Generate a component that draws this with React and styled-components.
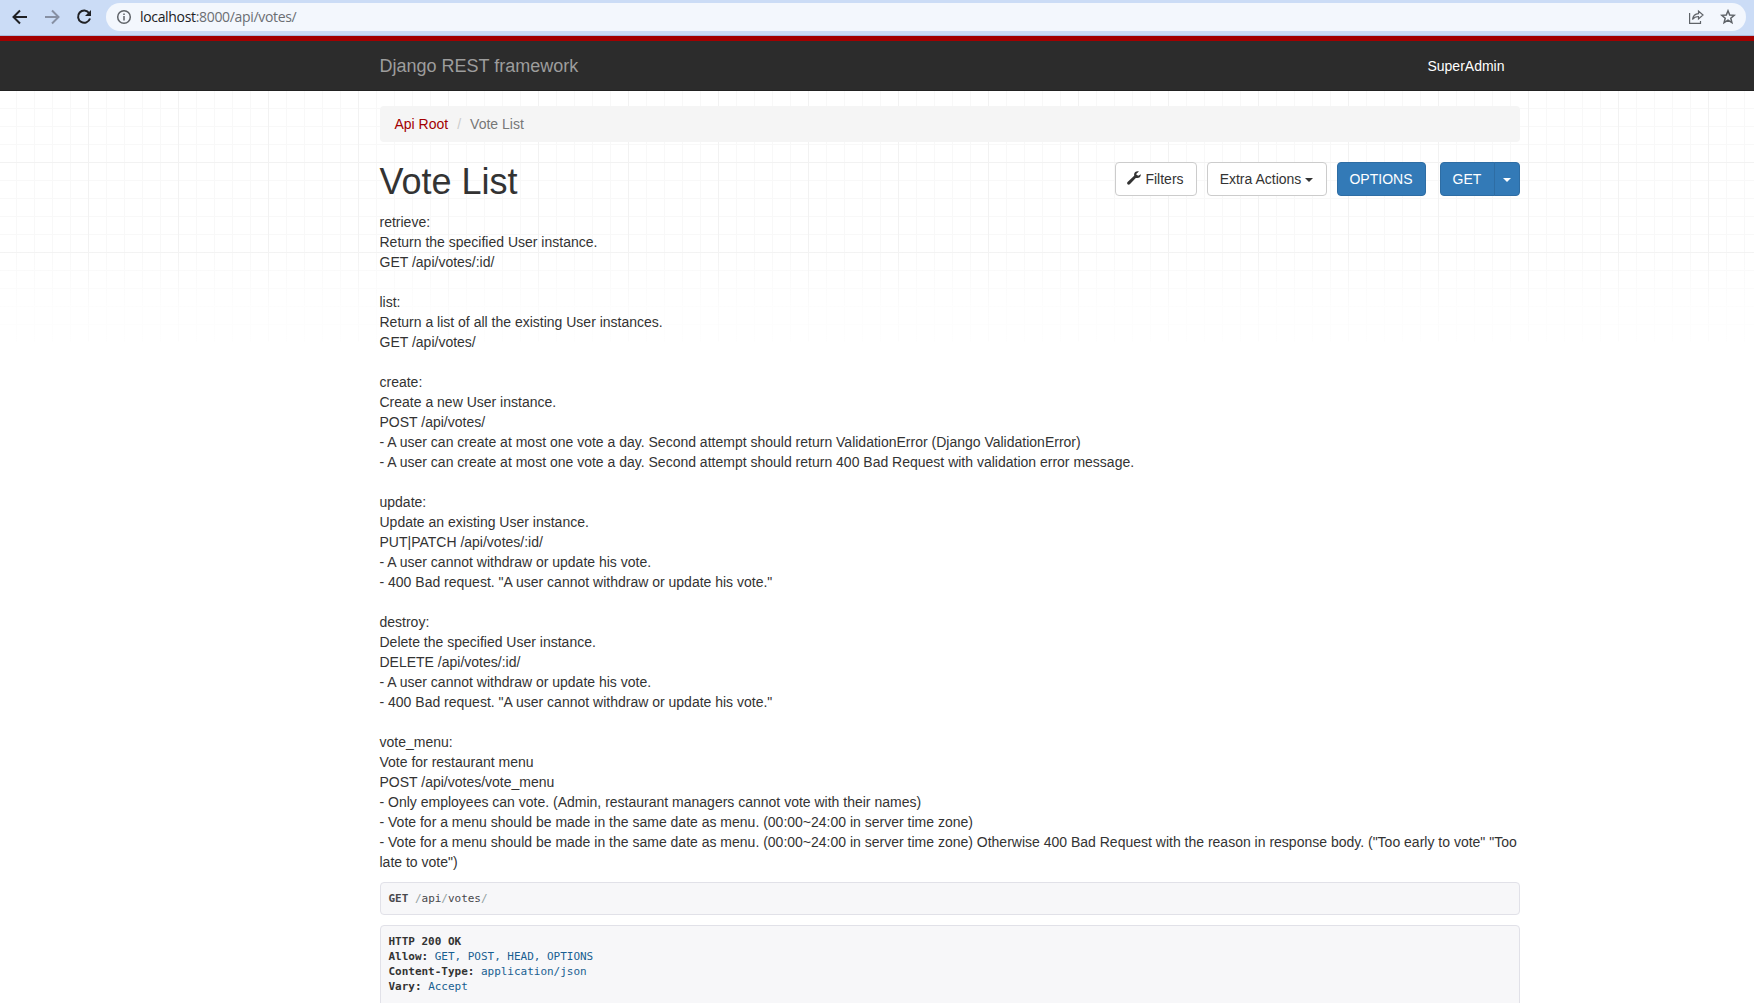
import React from "react";
import styled, { createGlobalStyle } from "styled-components";

const Global = createGlobalStyle`
  * { box-sizing: border-box; }
  html, body { margin: 0; padding: 0; height: 100%; overflow: hidden; }
  body {
    font-family: "Liberation Sans", Arial, sans-serif;
    font-size: 14px;
    line-height: 20px;
    color: #333;
    background: #fff;
  }
`;

const Screen = styled.div`
  display: flex;
  flex-direction: column;
  height: 1003px;
  overflow: hidden;
`;

const BrowserBar = styled.div`
  display: flex;
  align-items: center;
  flex: none;
  height: 36px;
  padding: 0 8px 1px 11px;
  background: #cbdcf6;
  border-bottom: 1px solid #aabbdb;
`;

const BrowserIcon = styled.svg`
  flex: none;
  width: 18px;
  height: 18px;
  margin-right: ${(p) => p.$gap || 14}px;
  fill: none;
  stroke: ${(p) => p.$color || "#202124"};
  stroke-width: 2;
`;

const AddressBar = styled.div`
  display: flex;
  align-items: center;
  flex: 1;
  height: 28px;
  padding: 0 10px;
  border-radius: 14px;
  background: #f3f7fd;
`;

const AddressIcon = styled.svg`
  flex: none;
  width: 16px;
  height: 16px;
  margin-left: ${(p) => p.$gap || 0}px;
  fill: none;
  stroke: #5f6368;
  stroke-width: 1.5;
`;

const Url = styled.span`
  flex: 1;
  margin-left: 8px;
  font-family: "Open Sans", "Noto Sans", sans-serif;
  font-size: 14px;
  letter-spacing: -0.33px;
  color: #6b6e73;
  b { font-weight: 400; color: #202124; }
`;

const NavBar = styled.nav`
  flex: none;
  height: 55px;
  border-top: 5px solid #a30000;
  border-bottom: 1px solid #222;
  background: #2c2c2c;
`;

const NavInner = styled.div`
  display: flex;
  justify-content: space-between;
  align-items: center;
  width: 1140px;
  height: 49px;
  margin-left: 379.5px;
  padding-right: 15px;
`;

const Brand = styled.span`
  font-size: 18px;
  color: #9d9d9d;
`;

const UserName = styled.span`
  color: #fff;
`;

const Page = styled.main`
  flex: 1;
  padding: 15px 0 0 379.5px;
  background:
    linear-gradient(to bottom, rgba(255,255,255,0) 155px, rgba(255,255,255,.4) 190px, rgba(255,255,255,.72) 218px, rgba(255,255,255,.8) 250px, #fff 251px),
    repeating-linear-gradient(to right, transparent 0 88px, #f2f2f2 88px 89px, transparent 89px 90px),
    repeating-linear-gradient(to bottom, transparent 0 71px, #f2f2f2 71px 72px, transparent 72px 90px),
    repeating-linear-gradient(to right, transparent 0 16px, #f8f8f8 16px 17px, transparent 17px 18px),
    repeating-linear-gradient(to bottom, transparent 0 17px, #f8f8f8 17px 18px),
    #fff;
`;

const Content = styled.div`
  width: 1140px;
`;

const Breadcrumb = styled.div`
  display: flex;
  height: 36px;
  padding: 8px 15px;
  border-radius: 4px;
  background: #f5f5f5;
  color: #777;
`;

const Crumb = styled.span`
  color: ${(p) => (p.$link ? "#a30000" : "#777")};
`;

const Slash = styled.span`
  padding: 0 9px;
  color: #ccc;
`;

const Header = styled.div`
  display: flex;
  justify-content: space-between;
  align-items: flex-start;
  height: 70px;
  padding-top: 20px;
`;

const Title = styled.h1`
  margin: 0;
  font-size: 36px;
  line-height: 39px;
  font-weight: 400;
`;

const Actions = styled.div`
  display: flex;
`;

const Button = styled.button`
  display: inline-flex;
  align-items: center;
  justify-content: center;
  width: ${(p) => p.$w}px;
  height: 34px;
  margin-left: ${(p) => p.$gap || 0}px;
  padding: 0;
  border: 1px solid ${(p) => (p.$primary ? "#2e6da4" : "#ccc")};
  border-radius: ${(p) => p.$radius || "4px"};
  background: ${(p) => (p.$primary ? "#337ab7" : "#fff")};
  color: ${(p) => (p.$primary ? "#fff" : "#333")};
  font: 14px/20px "Liberation Sans", Arial, sans-serif;
`;

const Caret = styled.span`
  margin-left: ${(p) => p.$gap || 0}px;
  margin-top: 1px;
  border-top: 4px solid currentColor;
  border-left: 4px solid transparent;
  border-right: 4px solid transparent;
`;

const Wrench = styled.svg`
  width: 14px;
  height: 14px;
  margin: -3px 4px 0 0;
  fill: #333;
`;

const Description = styled.p`
  margin: 0 0 10px;
  white-space: pre-wrap;
`;

const CodeBlock = styled.pre`
  height: ${(p) => p.$h}px;
  margin: 0 0 10px;
  padding: 8px;
  border: 1px solid #e1e1e8;
  border-radius: 4px;
  background: #f7f7f9;
  color: #333;
  font: 11px/15px "DejaVu Sans Mono", monospace;
  letter-spacing: -0.02px;
`;

const Plain = styled.span`
  color: ${(p) => (p.$faint ? "#93a1a1" : "#48484c")};
`;

const Value = styled.span`
  color: #195f91;
`;

const description = `retrieve:
Return the specified User instance.
GET /api/votes/:id/

list:
Return a list of all the existing User instances.
GET /api/votes/

create:
Create a new User instance.
POST /api/votes/
- A user can create at most one vote a day. Second attempt should return ValidationError (Django ValidationError)
- A user can create at most one vote a day. Second attempt should return 400 Bad Request with validation error message.

update:
Update an existing User instance.
PUT|PATCH /api/votes/:id/
- A user cannot withdraw or update his vote.
- 400 Bad request. "A user cannot withdraw or update his vote."

destroy:
Delete the specified User instance.
DELETE /api/votes/:id/
- A user cannot withdraw or update his vote.
- 400 Bad request. "A user cannot withdraw or update his vote."

vote_menu:
Vote for restaurant menu
POST /api/votes/vote_menu
- Only employees can vote. (Admin, restaurant managers cannot vote with their names)
- Vote for a menu should be made in the same date as menu. (00:00~24:00 in server time zone)
- Vote for a menu should be made in the same date as menu. (00:00~24:00 in server time zone) Otherwise 400 Bad Request with the reason in response body. ("Too early to vote" "Too late to vote")`;

const headers = [
  ["Allow:", "GET, POST, HEAD, OPTIONS"],
  ["Content-Type:", "application/json"],
  ["Vary:", "Accept"],
];

export default function App() {
  return (
    <Screen>
      <Global />
      <BrowserBar>
        <BrowserIcon viewBox="0 0 18 18"><path d="M16 9H3M9 2.5L2.5 9L9 15.5" /></BrowserIcon>
        <BrowserIcon viewBox="0 0 18 18" $color="#8790a3"><path d="M2 9H15M9 2.5L15.5 9L9 15.5" /></BrowserIcon>
        <BrowserIcon viewBox="0 0 18 18" $gap={13}>
          <path d="M14.2 5.2A6.1 6.1 0 1 0 15 10.5" />
          <path d="M16 2V8H10Z" fill="#202124" stroke="none" />
        </BrowserIcon>
        <AddressBar>
          <AddressIcon viewBox="0 0 16 16"><circle cx="8" cy="8" r="6.3" /><path d="M8 7V11.5M8 4.5V6" /></AddressIcon>
          <Url><b>localhost</b>:8000/api/votes/</Url>
          <AddressIcon viewBox="0 0 16 16">
            <path strokeWidth="1.2" d="M1.6 4V14.4H12.5V12" />
            <path strokeWidth="1.2" d="M4.5 10.5C5 7 7.5 5 10.5 4.7V2L15 6L10.5 10V7.5C8 7.5 6 8.5 4.5 10.5Z" />
          </AddressIcon>
          <AddressIcon viewBox="0 0 16 16" $gap={16}>
            <path d="M8 1.8L9.7 6L14.2 6.3L10.8 9.2L11.9 13.6L8 11.2L4.1 13.6L5.2 9.2L1.8 6.3L6.3 6Z" />
          </AddressIcon>
        </AddressBar>
      </BrowserBar>
      <NavBar>
        <NavInner>
          <Brand>Django REST framework</Brand>
          <UserName>SuperAdmin</UserName>
        </NavInner>
      </NavBar>
      <Page>
        <Content>
          <Breadcrumb>
            <Crumb $link>Api Root</Crumb>
            <Slash>/</Slash>
            <Crumb>Vote List</Crumb>
          </Breadcrumb>
          <Header>
            <Title>Vote List</Title>
            <Actions>
              <Button $w={82}>
                <Wrench viewBox="0 0 14 14">
                  <path d="M13.8 3.2L11.3 4.7L9.4 3.7V2.7L11.9.5C9.8-.3 7.3 1 7.1 3.3L7.2 4.8L.6 11.1C-.8 12.7 1.2 14.6 2.8 13.3L8.8 6.9C11.7 7.8 14.2 5.8 13.8 3.2Z" />
                </Wrench>
                Filters
              </Button>
              <Button $w={120} $gap={10}>Extra Actions<Caret $gap={4} /></Button>
              <Button $w={89} $gap={10} $primary>OPTIONS</Button>
              <Button $w={55} $gap={14} $primary $radius="4px 0 0 4px">GET</Button>
              <Button $w={26} $gap={-1} $primary $radius="0 4px 4px 0"><Caret /></Button>
            </Actions>
          </Header>
          <Description>{description}</Description>
          <CodeBlock $h={33}><Plain><b>GET</b> <Plain $faint>/</Plain>api<Plain $faint>/</Plain>votes<Plain $faint>/</Plain></Plain></CodeBlock>
          <CodeBlock $h={120}>
            <b>HTTP 200 OK</b>{"\n"}
            {headers.map(([name, value]) => (
              <React.Fragment key={name}><b>{name}</b> <Value>{value}</Value>{"\n"}</React.Fragment>
            ))}
          </CodeBlock>
        </Content>
      </Page>
    </Screen>
  );
}
